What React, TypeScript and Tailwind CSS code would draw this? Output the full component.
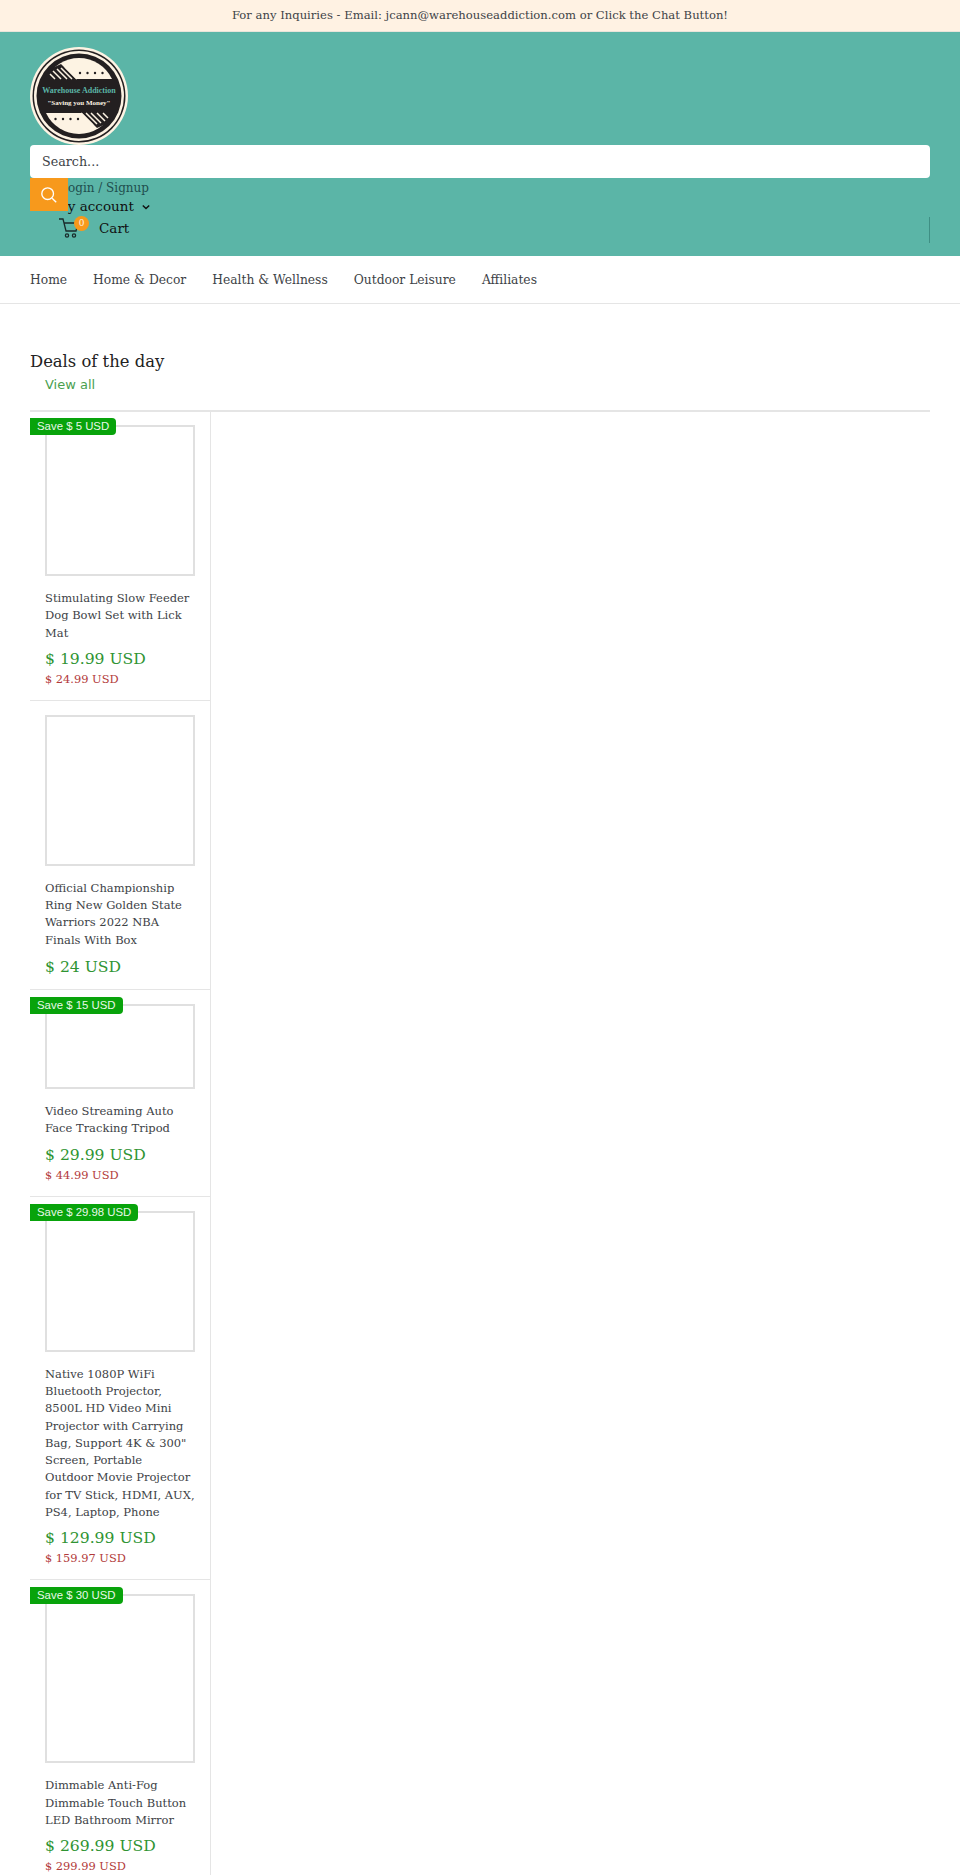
const serif = "font-['DejaVu_Serif',serif]";

const products = [
  { save: "Save $ 5 USD", h: "h-[151px]", title: "Stimulating Slow Feeder Dog Bowl Set with Lick Mat", price: "$ 19.99 USD", was: "$ 24.99 USD" },
  { title: "Official Championship Ring New Golden State Warriors 2022 NBA Finals With Box", h: "h-[151px]", price: "$ 24 USD" },
  { save: "Save $ 15 USD", h: "h-[85px]", title: "Video Streaming Auto Face Tracking Tripod", price: "$ 29.99 USD", was: "$ 44.99 USD" },
  { save: "Save $ 29.98 USD", h: "h-[141px]", title: 'Native 1080P WiFi Bluetooth Projector, 8500L HD Video Mini Projector with Carrying Bag, Support 4K & 300" Screen, Portable\nOutdoor Movie Projector for TV Stick, HDMI, AUX, PS4, Laptop, Phone', price: "$ 129.99 USD", was: "$ 159.97 USD" },
  { save: "Save $ 30 USD", h: "h-[169px]", title: "Dimmable Anti-Fog Dimmable Touch Button LED Bathroom Mirror", price: "$ 269.99 USD", was: "$ 299.99 USD" },
];

const Logo = () => (
  <svg viewBox="0 0 98 98" className="w-[98px] h-[98px] block">
    <circle cx="49" cy="49" r="49" fill="#fdf3e3" />
    <circle cx="49" cy="49" r="46.5" fill="#231f20" />
    <circle cx="49" cy="49" r="45" fill="#fdf3e3" />
    <circle cx="49" cy="49" r="42.5" fill="#231f20" />
    <path d="M16 32 A36.5 36.5 0 0 1 82 32 Z" fill="#fdf3e3" />
    <path d="M16 66 A36.5 36.5 0 0 0 82 66 Z" fill="#fdf3e3" />
    <path d="M31 17 L46 32 H14 L20 22 Z" fill="#231f20" />
    <path d="M67 81 L52 66 H84 L78 76 Z" fill="#231f20" />
    <g stroke="#fdf3e3" strokeWidth="1.5">
      <path d="M35 20 L47 32 M31 21 L42 32 M27 22 L37 32 M23 24 L31 32 M20 27 L25 32" />
      <path d="M63 78 L51 66 M67 77 L56 66 M71 76 L61 66 M75 74 L67 66 M78 71 L73 66" />
    </g>
    <g fill="#231f20">
      <circle cx="50" cy="26" r="1.2" /><circle cx="57.5" cy="26" r="1.2" /><circle cx="65" cy="26" r="1.2" /><circle cx="72.5" cy="26" r="1.2" />
      <circle cx="25.5" cy="72" r="1.2" /><circle cx="33" cy="72" r="1.2" /><circle cx="40.5" cy="72" r="1.2" /><circle cx="48" cy="72" r="1.2" />
    </g>
    <text x="49" y="45.5" textAnchor="middle" fontSize="8" fontWeight="700" fill="#5bb5a7" fontFamily="Liberation Serif">Warehouse Addiction</text>
    <text x="49" y="58" textAnchor="middle" fontSize="7" fontWeight="700" fill="#fdf3e3" fontFamily="Liberation Serif">"Saving you Money"</text>
  </svg>
);

const App = () => {
  return (
    <div className={`${serif} bg-white h-[1875px] overflow-hidden text-[#3d4246]`}>
      <div className="bg-[#fff2e3] h-8 flex items-center justify-center text-[11.6px] border-b border-[#e8e4da]">
        For any Inquiries - Email: jcann@warehouseaddiction.com or Click the Chat Button!
      </div>

      <header className="bg-[#5bb5a7] h-[224px] px-[30px] pt-[15px]">
        <Logo />
        <div className="bg-white rounded-sm h-[33px] flex items-center px-3 text-[12.7px]">Search...</div>
        <div className="relative h-[78px]">
          <button className="absolute left-0 top-0 w-[38px] h-[33px] bg-[#f7991c] flex items-center justify-center">
            <svg viewBox="0 0 20 20" className="w-[18px] h-[18px]" fill="none" stroke="#fff" strokeWidth="1.5">
              <circle cx="8.5" cy="8.5" r="6.5" />
              <path d="M13.5 13.5 L18 18" />
            </svg>
          </button>
          <div className="pl-[30px] text-[12px] leading-[20px] text-[#1f4e4e]">Login / Signup</div>
          <div className="pl-[24px] flex items-center gap-2 text-[13.5px] leading-[17px] text-[#111]">
            My account
            <svg viewBox="0 0 10 6" className="w-2 h-[6px]" fill="none" stroke="#111" strokeWidth="1.8"><path d="M1 1 L5 5 L9 1" /></svg>
          </div>
          <div className="flex items-center pl-[28px] mt-[2px] text-[13.5px] text-[#111] relative">
            <svg viewBox="0 0 22 22" className="w-[22px] h-[22px]" fill="none" stroke="#1a2b2b" strokeWidth="1.3">
              <path d="M1 2 H5 L8 14 H18 L20 6 H6" />
              <circle cx="9" cy="18.5" r="1.6" />
              <circle cx="16" cy="18.5" r="1.6" />
            </svg>
            <span className="absolute left-[44px] -top-[1px] w-[15px] h-[15px] rounded-full bg-[#f7991c] text-[#fff2e3] text-[9px] flex items-center justify-center">0</span>
            <span className="ml-[19px]">Cart</span>
            <span className="absolute right-0 top-0 h-[26px] border-l border-[#3f8f84]" />
          </div>
        </div>
      </header>

      <nav className="h-[48px] pt-[1px] border-b border-[#e5e5e5] flex items-center gap-[26px] px-[30px] text-[12.3px]">
        <span>Home</span>
        <span>Home &amp; Decor</span>
        <span>Health &amp; Wellness</span>
        <span>Outdoor Leisure</span>
        <span>Affiliates</span>
      </nav>

      <main className="px-[30px] pt-[47px]">
        <h2 className="text-[16.4px] leading-[22px] text-[#222]">Deals of the day</h2>
        <a className="block pl-[15px] mt-[2px] text-[13px] leading-[20px] text-[#4a9f50] font-['DejaVu_Sans',sans-serif]">View all</a>
        <div className="mt-[15px] border-t-2 border-[#e5e5e5]">
          <div className="w-[181px] -mt-px border-r border-[#e5e5e5]">
            {products.map((p) => (
              <div key={p.title} className="relative border-b border-[#e5e5e5] px-[15px] pt-[14px] pb-[11px]">
                {p.save && (
                  <span className="absolute left-0 top-[7px] bg-[#08a30b] text-[#e8f8e8] text-[11.4px] leading-[17px] px-[7px] rounded-r-sm font-['Liberation_Sans',sans-serif]">
                    {p.save}
                  </span>
                )}
                <div className={`${p.h} border-2 border-[#e0e0e0]`} />
                <p className="mt-[14px] text-[11.5px] leading-[17.3px] whitespace-pre-line">{p.title}</p>
                <p className={`${p.was ? "mt-[6px]" : "mt-[7px]"} text-[15.6px] leading-[22px] text-[#2f9433]`}>{p.price}</p>
                {p.was && <p className="text-[11.4px] leading-[19px] text-[#b23a3a]">{p.was}</p>}
              </div>
            ))}
          </div>
        </div>
      </main>
    </div>
  );
};

export default App;
